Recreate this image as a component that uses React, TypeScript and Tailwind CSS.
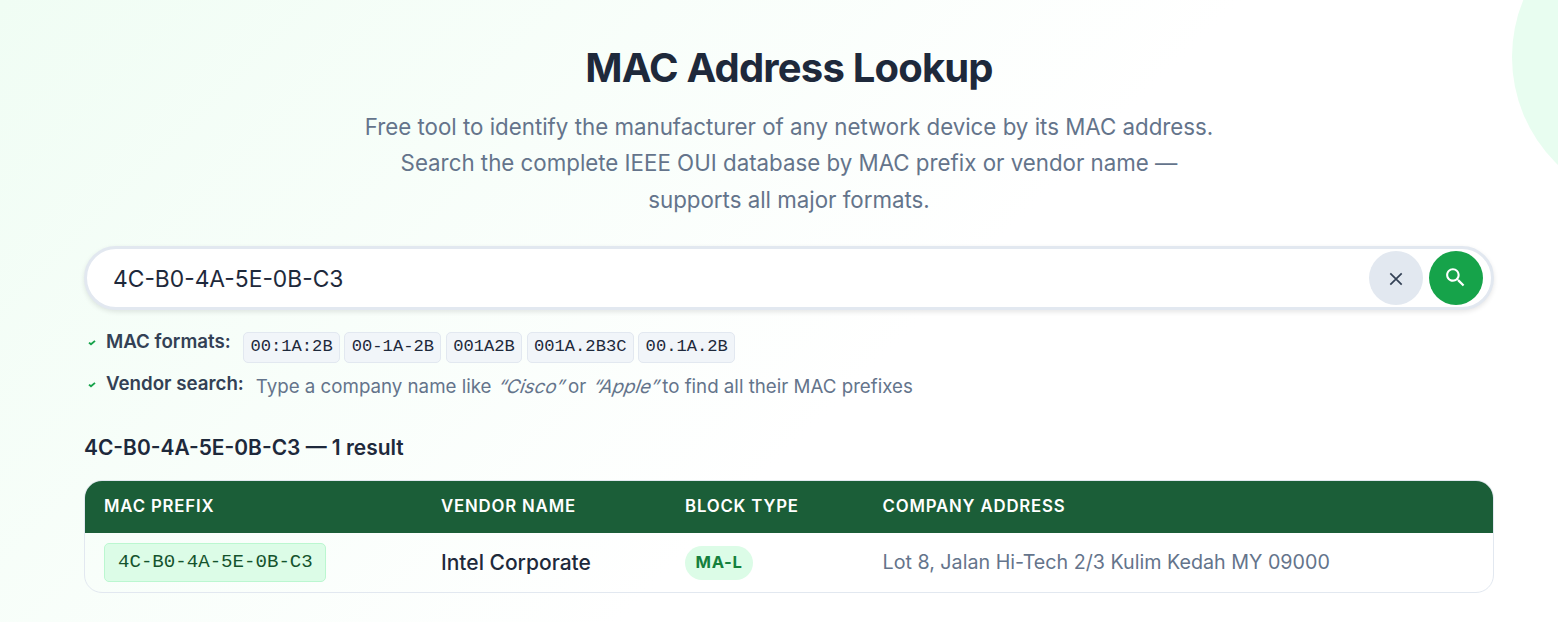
import React, { useState } from "react";

const formats = ["00:1A:2B", "00-1A-2B", "001A2B", "001A.2B3C", "00.1A.2B"];

const results = [
  {
    prefix: "4C-B0-4A-5E-0B-C3",
    vendor: "Intel Corporate",
    block: "MA-L",
    address: "Lot 8, Jalan Hi-Tech 2/3 Kulim Kedah MY 09000",
  },
];

const columns = "grid grid-cols-[337px_244px_197.5px_1fr] items-center pl-[19px]";
const slanted = "inline-block origin-[0_72%] -skew-x-[19deg] not-italic";

function Check() {
  return (
    <svg className="mt-px h-[6px] w-[8px] shrink-0" viewBox="0 0 8 6" fill="none" stroke="#16a34a" strokeWidth="1.9">
      <path d="M1 2.6l2 1.7L7 0.9" />
    </svg>
  );
}

function App() {
  const [query, setQuery] = useState("4C-B0-4A-5E-0B-C3");

  return (
    <div className="relative h-[622px] w-full overflow-hidden bg-[linear-gradient(135deg,#f0fdf4_0%,#ffffff_57%)] font-['Inter',sans-serif] text-[#1e293b]">
      {/* ===== Decorative circle ===== */}
      <div className="absolute -top-[93px] left-[1512px] h-[300px] w-[300px] rounded-full bg-[#e8fdf0]" />

      <div className="relative ml-[84px] w-[1410px] pt-[44px]">
        {/* ===== Header ===== */}
        <header className="text-center">
          <h1 className="text-[40px] leading-[48px] font-bold tracking-[-0.82px]">MAC Address Lookup</h1>
          <p className="mx-auto mt-[17px] mb-[27px] h-[110px] w-[900px] text-[22.3px] leading-[36.4px] text-[#64748b]">
            Free tool to identify the manufacturer of any network device by its MAC address.
            <br />
            Search the complete IEEE OUI database by MAC prefix or vendor name —
            <br />
            supports all major formats.
          </p>
        </header>

        {/* ===== Search ===== */}
        <div className="flex h-[64px] items-center gap-[6px] rounded-full border-3 border-[#e2e8f0] bg-white pr-[8px] pl-[26px] shadow-[0_2px_5px_rgba(0,0,0,0.1)]">
          <input
            className="min-w-0 flex-1 bg-transparent pt-[2px] text-[22.8px] outline-none"
            value={query}
            onChange={(e) => setQuery(e.target.value)}
          />
          <button
            onClick={() => setQuery("")}
            className="flex h-[54px] w-[54px] items-center justify-center rounded-full bg-[#e2e8f0] pt-px"
          >
            <svg className="h-[14px] w-[14px]" viewBox="0 0 14 14" stroke="#334155" strokeWidth="1.7">
              <path d="M1.3 1.3l11.4 11.4M12.7 1.3L1.3 12.7" />
            </svg>
          </button>
          <button className="flex h-[54px] w-[54px] items-center justify-center rounded-full bg-[#16a34a] pr-[1.5px] pb-[1.5px]">
            <svg className="h-[25px] w-[25px]" viewBox="0 0 24 24" fill="white">
              <path d="M15.5 14h-.79l-.28-.27C15.41 12.59 16 11.11 16 9.5 16 5.91 13.09 3 9.5 3S3 5.91 3 9.5 5.91 16 9.5 16c1.61 0 3.09-.59 4.23-1.57l.27.28v.79l5 4.99L20.49 19l-4.99-5zm-6 0C7.01 14 5 11.99 5 9.5S7.01 5 9.5 5 14 7.01 14 9.5 11.99 14 9.5 14z" />
            </svg>
          </button>
        </div>

        {/* ===== Hints ===== */}
        <div className="mt-[22px] flex h-[31px] items-start pl-[4px] text-[18.72px]">
          <div className="flex h-[20px] items-center gap-[10px]">
            <Check />
            <strong className="font-semibold text-[#334155]">MAC formats:</strong>
          </div>
          <div className="ml-[12.3px] flex gap-[4.3px]">
            {formats.map((f) => (
              <code
                key={f}
                className="h-[31px] rounded-[5px] border border-[#e2e8f0] bg-[#f1f5f9] px-[6.4px] font-['Liberation_Mono',monospace] text-[17.15px] leading-[27px] text-[#1e293b]"
              >
                {f}
              </code>
            ))}
          </div>
        </div>
        <div className="mt-[11px] flex h-[24px] items-start pl-[4px] text-[18.72px]">
          <div className="flex h-[20px] items-center gap-[10px]">
            <Check />
            <strong className="font-semibold text-[#334155]">Vendor search:</strong>
          </div>
          <span className="ml-[12px] leading-[25px] text-[#64748b]">
            Type a company name like <em className={slanted}>“Cisco”</em> or <em className={slanted}>“Apple”</em> to
            find all their MAC prefixes
          </span>
        </div>

        {/* ===== Results ===== */}
        <h2 className="mt-[36px] text-[20.95px] leading-[28px] font-semibold">4C-B0-4A-5E-0B-C3 — 1 result</h2>
        <div className="mt-[18px] overflow-hidden rounded-[18px] border border-[#e2e8f0]">
          <div className={`${columns} h-[52px] bg-[#1b5e38] pb-px text-[16.8px] font-semibold tracking-[0.82px] text-white`}>
            <span>MAC PREFIX</span>
            <span>VENDOR NAME</span>
            <span>BLOCK TYPE</span>
            <span>COMPANY ADDRESS</span>
          </div>
          {results.map((r) => (
            <div key={r.prefix} className={`${columns} h-[59px]`}>
              <code className="h-[39px] w-[222px] rounded-[5px] border border-[#bbf7d0] bg-[#dcfce7] px-[13px] font-['Liberation_Mono',monospace] text-[19.1px] leading-[36px] whitespace-nowrap text-[#14532d]">
                {r.prefix}
              </code>
              <span className="text-[21px] font-medium">{r.vendor}</span>
              <span className="flex h-[34px] w-[68px] items-center justify-center rounded-full bg-[#dcfce7] text-[16.6px] font-bold tracking-[0.6px] text-[#15803d]">
                {r.block}
              </span>
              <span className="text-[19.7px] text-[#64748b]">{r.address}</span>
            </div>
          ))}
        </div>
      </div>
    </div>
  );
}

export default App;
